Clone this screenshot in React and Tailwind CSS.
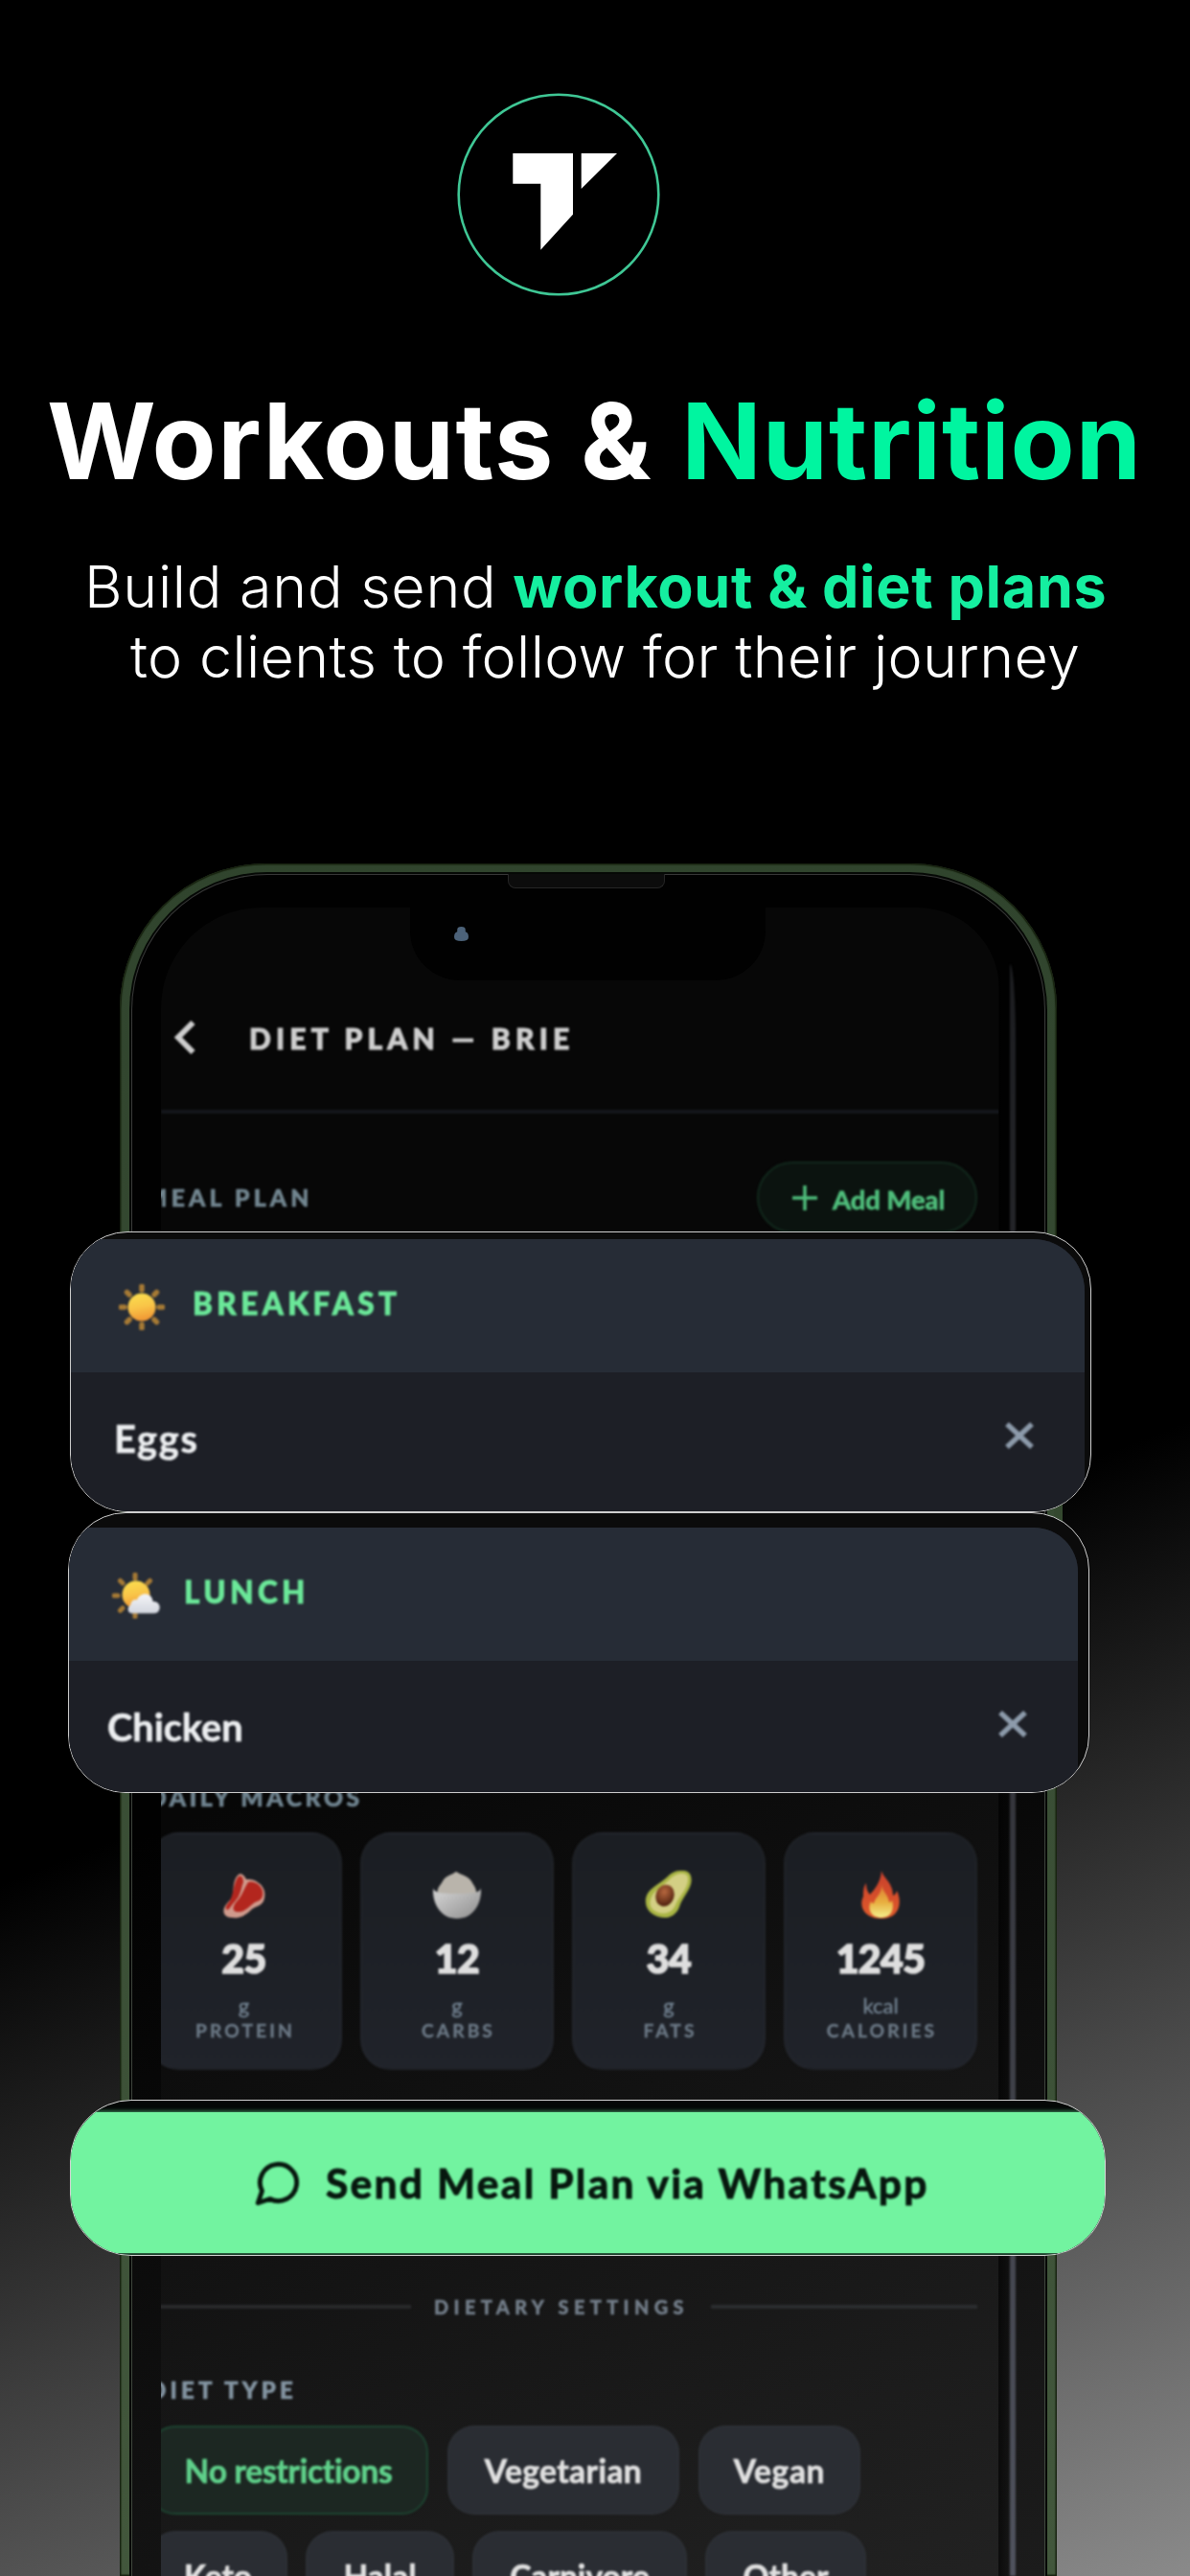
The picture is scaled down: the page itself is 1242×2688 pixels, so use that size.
import React from "react";

function Logo() {
  return (
    <svg viewBox="0 0 212 212" className="block h-[212px] w-[212px]">
      <circle cx="106" cy="106" r="104.3" fill="none" stroke="#3fc795" strokeWidth="2.6" />
      <path d="M58.3 63H121V126.700L87.300 163.700V94.700H58.300ZM129.700 63H167L129.700 100Z" fill="#fff" />
    </svg>
  );
}

function SunIcon() {
  return (
    <svg viewBox="0 0 48 48" className="block h-[48px] w-[48px] shrink-0 blur-[1px]">
      <defs>
        <linearGradient id="sunFill" x1="0" y1="0" x2="0.2" y2="1">
          <stop offset="0" stopColor="#fbe04f" />
          <stop offset="0.55" stopColor="#f9c548" />
          <stop offset="1" stopColor="#f19a35" />
        </linearGradient>
      </defs>
      <path
        d="M24 2V6M24 42V46M2 24H6M42 24H46M8.500 8.500L11 11M37 37L39.500 39.500M8.500 39.500L11 37M37 11L39.500 8.500"
        stroke="#a67a35"
        strokeWidth="5.500"
        strokeLinecap="round"
      />
      <circle cx="24" cy="24" r="14.500" fill="url(#sunFill)" />
    </svg>
  );
}

function SunCloudIcon() {
  return (
    <svg viewBox="0 0 50 48" className="block h-[48px] w-[50px] shrink-0 blur-[1px]">
      <defs>
        <linearGradient id="cloudFill" x1="0" y1="0" x2="0" y2="1">
          <stop offset="0" stopColor="#f4f5f8" />
          <stop offset="1" stopColor="#d2d6de" />
        </linearGradient>
      </defs>
      <path
        d="M24 2V6M24 42V46M2 24H6M8.500 8.500L11 11M8.500 39.500L11 37M37 11L39.500 8.500"
        stroke="#a67a35"
        strokeWidth="5"
        strokeLinecap="round"
      />
      <circle cx="25" cy="23" r="14.500" fill="url(#sunFill)" />
      <path
        d="M20.500 42.500C16 42.500 15 36 19.500 33.500C19.500 29.500 23 27.500 26 28.500C28 22 37 20 41 25.500C42 27 42.500 28.500 42.500 30C48 30 50.500 34 49.500 38C48.800 41 46.500 42.500 43.500 42.500Z"
        fill="url(#cloudFill)"
      />
    </svg>
  );
}

function SteakIcon() {
  return (
    <svg viewBox="0 0 50 50" className="block h-[50px] w-[50px]">
      <path
        d="M19 4C22 2 25 5 27 9C31 9 36 9 40 13C46 17 48 24 45 32C41 38 36 37 32 41C27 46 21 50 12 49C5 49 2 44 4 39C6 33 12 31 13 25C14 18 13 9 19 4Z"
        fill="#cf9a8c"
      />
      <path
        d="M19 6C22 4 24 8 24 12C22 17 22 21 19 27C16 32 13 34 9 40C6 42 4 39 8 34C14 29 13 12 19 6Z"
        fill="#b3261e"
      />
      <path
        d="M29 12C34 10 42 14 44 21C45 28 43 31 36 33C30 37 27 43 18 43C12 43 12 37 18 31C23 25 24 20 29 12Z"
        fill="#b3261e"
      />
    </svg>
  );
}

function RiceIcon() {
  return (
    <svg viewBox="0 0 50 50" className="block h-[50px] w-[50px]">
      <defs>
        <linearGradient id="bowlFill" x1="0" y1="0" x2="1" y2="1">
          <stop offset="0.2" stopColor="#c9c9c9" />
          <stop offset="1" stopColor="#8d8d8d" />
        </linearGradient>
      </defs>
      <path d="M5 26C3 18 8 15 10 11C13 5 19 5 24 1C30 5 36 5 40 11C42 15 46 18 45 26Z" fill="#b9b4ab" />
      <path d="M0 18C1 23 8 24 25 24C42 24 49 23 50 18C51 33 43 50 25 50C7 50 -1 33 0 18Z" fill="url(#bowlFill)" />
    </svg>
  );
}

function AvocadoIcon() {
  return (
    <svg viewBox="0 0 50 50" className="block h-[50px] w-[50px]">
      <defs>
        <radialGradient id="pitFill" cx="0.400" cy="0.350" r="0.700">
          <stop offset="0" stopColor="#b8683f" />
          <stop offset="1" stopColor="#4a1d0c" />
        </radialGradient>
      </defs>
      <path
        d="M38 0C47 -1 50 6 48 14C45 24 39 28 36 38C32 48 23 51 14 48C4 45 0 38 1 29C3 18 15 15 24 6C29 1 33 0 38 0Z"
        fill="#a9b544"
      />
      <path
        d="M39 3C46 3 46 9 44 15C41 23 35 28 32 36C29 43 22 46 15 44C7 42 4 36 6 30C8 21 17 18 26 9C31 4 35 3 39 3Z"
        fill="#d3cf84"
      />
      <ellipse cx="21" cy="26" rx="9.500" ry="11.500" transform="rotate(20 21 26)" fill="url(#pitFill)" />
    </svg>
  );
}

function FireIcon() {
  return (
    <svg viewBox="0 0 50 50" className="block h-[50px] w-[50px]">
      <defs>
        <linearGradient id="flameFill" x1="0" y1="0" x2="0" y2="1">
          <stop offset="0" stopColor="#c8402c" />
          <stop offset="1" stopColor="#e05a2b" />
        </linearGradient>
        <linearGradient id="flameCore" x1="0" y1="0" x2="0" y2="1">
          <stop offset="0" stopColor="#dd7a32" />
          <stop offset="0.550" stopColor="#e8b040" />
          <stop offset="1" stopColor="#f3f08c" />
        </linearGradient>
      </defs>
      <path
        d="M26 0C28 8 38 12 38 26C41 25 41 23 42 21C48 33 45 50 26 50C8 50 2 37 7 27C7 22 7 17 10 13C10 18 11 22 14 25C17 21 25 14 26 0Z"
        fill="url(#flameFill)"
      />
      <path d="M26 14C27 22 33 25 34 33C36 33 36 32 37 31C40 40 36 49 26 49C15 49 11 40 15 32C16 34 17 34 18 34C20 27 27 24 26 14Z" fill="url(#flameCore)" />
    </svg>
  );
}

function CloseIcon() {
  return (
    <svg viewBox="0 0 32 30" className="block h-[30px] w-[32px] blur-[1px]">
      <path d="M3 3L29 27M29 3L3 27" stroke="#8d9bab" strokeWidth="5.500" />
    </svg>
  );
}

const macros = [
  { icon: <SteakIcon />, value: "25", unit: "g", label: "PROTEIN", shift: "pr-[3px]" },
  { icon: <RiceIcon />, value: "12", unit: "g", label: "CARBS", shift: "" },
  { icon: <AvocadoIcon />, value: "34", unit: "g", label: "FATS", shift: "" },
  { icon: <FireIcon />, value: "1245", unit: "kcal", label: "CALORIES", shift: "" },
];

function MacroCard({ icon, value, unit, label, shift }) {
  return (
    <div className={`flex h-[248px] flex-col items-center rounded-[32px] border-2 border-white/[0.02] bg-gradient-to-b from-[#1b1e23] to-[#20232a] pt-[38px] ${shift}`}>
      {icon}
      <div className="mt-[22px] text-[41px] leading-[40px] font-black tracking-[-0.600px] text-[#dedede] [-webkit-text-stroke:1.600px_#dedede]">{value}</div>
      <div className="mt-[18px] text-[22px] leading-[22px] text-[#71808f] [-webkit-text-stroke:0.400px_#71808f]">{unit}</div>
      <div className="mt-[5px] pl-[3px] text-[19.200px] leading-[19px] font-bold tracking-[3.100px] text-[#6a7784] [-webkit-text-stroke:0.400px_#6a7784]">{label}</div>
    </div>
  );
}

function Chip({ children, size }) {
  return (
    <div className={`flex h-[93px] shrink-0 items-center justify-center rounded-[28px] border-2 border-white/[0.02] bg-[#2a2d33] text-[33.600px] leading-[34px] font-bold text-[#e0e0e0] [-webkit-text-stroke:0.700px_#e0e0e0] ${size}`}>
      {children}
    </div>
  );
}

function MealCard({ icon, title, item, place, panel, headPad, bodyPad }) {
  return (
    <section className={`absolute flex h-[293px] w-[1066px] flex-col overflow-hidden rounded-[60px] border border-[#cfcfcf] bg-[#0b0b0b] ${place}`}>
      <div className={`flex grow flex-col overflow-hidden bg-[#1d1f26] ${panel}`}>
        <div className={`flex h-[139px] shrink-0 items-center bg-[#262c36] ${headPad}`}>
          <div className="mt-[3px]">{icon}</div>
          <h2 className="-mt-[5px] text-[31.500px] leading-[32px] font-black tracking-[4.400px] text-[#6be899] blur-[1px] [-webkit-text-stroke:0.800px_#6be899]">{title}</h2>
        </div>
        <div className={`flex items-start justify-between pt-[49px] pr-[52px] ${bodyPad}`}>
          <div className="text-[39.700px] leading-[40px] font-bold text-[#eceef0] blur-[1px] [-webkit-text-stroke:0.600px_#eceef0]">{item}</div>
          <div className="mt-[2px]">
            <CloseIcon />
          </div>
        </div>
      </div>
    </section>
  );
}

function PhoneScreen() {
  return (
    <div className="ml-[30px] h-[1741px] w-[875px] overflow-hidden rounded-tl-[105px] rounded-tr-[85px] bg-white/[0.028]">
      <div className="blur-[1.100px]">
        <div className="flex h-[215px] items-start border-b-4 border-[#15171b] pt-[118px]">
          <div className="flex h-[35px] items-center pl-[13px]">
            <svg viewBox="0 0 23 35" className="block h-[35px] w-[23px]">
              <path d="M20.500 2L5 17.500L20.500 33" fill="none" stroke="#cecece" strokeWidth="6" />
            </svg>
            <div className="pl-[56px] text-[30px] leading-[30px] font-black tracking-[5.200px] whitespace-nowrap text-[#cecece] [-webkit-text-stroke:1px_#cecece]">DIET PLAN — BRIE</div>
          </div>
        </div>
        <div className="-ml-[13px] w-[865px]">
          <div className="mt-[50px] flex h-[75px] items-center justify-between">
            <div className="-ml-[4px] text-[24.700px] leading-[25px] font-black tracking-[4.200px] text-[#72868f] [-webkit-text-stroke:0.700px_#6f838f]">MEAL PLAN</div>
            <div className="flex h-[75px] w-[230px] items-center rounded-full border-2 border-[#12291d] bg-[#0b130f] pl-[35px] text-[#4fbd7b]">
              <svg viewBox="0 0 26 26" className="block h-[26px] w-[26px]">
                <path d="M13 0V26M0 13H26" stroke="currentColor" strokeWidth="3.500" />
              </svg>
              <div className="pt-[4px] pl-[16px] text-[27.400px] leading-[28px] font-bold whitespace-nowrap [-webkit-text-stroke:0.800px_#4fbd7b]">Add Meal</div>
            </div>
          </div>
          <div className="mt-[576px] text-[24.700px] leading-[25px] font-black tracking-[3.600px] text-[#6f838f] [-webkit-text-stroke:0.700px_#6f838f]">DAILY MACROS</div>
          <div className="mt-[24px] grid grid-cols-4 gap-[19px]">
            {macros.map((m) => (
              <MacroCard key={m.label} {...m} />
            ))}
          </div>
          <div className="mt-[237px] flex items-center">
            <div className="h-[4px] w-[274px] bg-[#28292b]" />
            <div className="pl-[24px] text-[19.900px] leading-[20px] font-black tracking-[5.400px] whitespace-nowrap text-[#727d89] [-webkit-text-stroke:0.500px_#727d89]">DIETARY SETTINGS</div>
            <div className="ml-[23px] h-[4px] grow bg-[#2b2d2f]" />
          </div>
          <div className="mt-[65px] text-[24px] leading-[24px] font-black tracking-[4.200px] text-[#8394a1] [-webkit-text-stroke:0.700px_#8394a1]">DIET TYPE</div>
          <div className="mt-[25px] flex gap-[20px]">
            <div className="flex h-[93px] w-[292px] shrink-0 items-center justify-center rounded-[28px] border-2 border-[#1d4431] bg-[#1c2722] text-[33.600px] leading-[34px] font-bold tracking-[-0.300px] text-[#5fd08a] [-webkit-text-stroke:0.700px_#5fd08a]">
              No restrictions
            </div>
            <Chip size="w-[242px] tracking-[0.400px]">Vegetarian</Chip>
            <Chip size="w-[169px] tracking-[0.600px]">Vegan</Chip>
          </div>
          <div className="mt-[17px] flex gap-[19px]">
            <Chip size="w-[145px]">Keto</Chip>
            <Chip size="w-[155px]">Halal</Chip>
            <Chip size="w-[224px]">Carnivore</Chip>
            <Chip size="w-[168px]">Other</Chip>
          </div>
        </div>
      </div>
    </div>
  );
}

function Phone() {
  return (
    <div className="relative ml-[125px] h-[1787px] w-[978px]">
      <div className="absolute top-[499px] left-[976px] h-[350px] w-[8px] rounded-r-[3px] bg-[#34482f]" />
      <div className="h-[1787px] overflow-hidden rounded-t-[152px] bg-gradient-to-b from-[#30442d] to-[#42573c] px-[10px] pt-[9px] shadow-[inset_0_0_1px_1.500px_#17220f]">
        <div className="h-[1778px] rounded-t-[144px] bg-[#050805] px-[2px] pt-[2px]">
          <div className="h-[1776px] rounded-t-[142px] bg-gradient-to-b from-[#383838] to-[#40483e] px-px pt-px">
            <div className="h-[1775px] rounded-t-[141px] bg-[linear-gradient(158.7deg,#010101_47%,#1c1c1c_100%)] pt-[34px]">
              <PhoneScreen />
            </div>
          </div>
        </div>
      </div>
      <div className="absolute top-[11px] left-[405px] h-[15px] w-[164px] rounded-b-[8px] border border-t-0 border-[#262626] bg-[#0c0c0c]" />
      <div className="absolute top-[46px] left-[303px] flex h-[76px] w-[371px] rounded-b-[52px] bg-[#010101] pt-[20px] pl-[46px]">
        <svg viewBox="0 0 14 14" className="block h-[15px] w-[15px]">
          <path d="M3 3Q3 0 7 0Q11 0 11 3V5Q14 6 14 10Q14 14 7 14Q0 14 0 10Q0 6 3 5Z" fill="#4c6279" />
        </svg>
      </div>
      <div className="absolute top-[110px] left-[917px] h-[1677px] w-[18px] rounded-tr-[18px_90px] bg-gradient-to-r from-black/60 via-black/30 to-black/0" />
      <div className="absolute top-[105px] left-[929px] h-[1682px] w-[6px] rounded-tr-[6px_80px] bg-gradient-to-b from-[#1c1d20] via-[#34353b] to-[#50535e] blur-[1px]" />
    </div>
  );
}

export default function App() {
  return (
    <main className="relative flex h-[2688px] w-[1242px] flex-col overflow-hidden bg-[linear-gradient(158.7deg,#000_62%,#8a8a8a_100%)] font-['Lato',sans-serif]">
      <header className="flex h-[901px] shrink-0 flex-col font-['Inter',sans-serif] text-white">
        <div className="pt-[97px] pl-[477px]">
          <Logo />
        </div>
        <h1 className="mt-[96px] pl-[49px] text-[109.600px] leading-[110px] font-bold tracking-[1.340px] whitespace-nowrap">
          Workouts &amp; <span className="ml-[3px] tracking-[0.900px] text-[#00f5a0]">Nutrition</span>
        </h1>
        <p className="mt-[61px] text-[61px] leading-[73px] font-light whitespace-nowrap">
          <span className="block pl-[88px] tracking-[0.700px]">
            Build and send <strong className="-ml-px font-bold tracking-[0.680px] text-[#15efa0]">workout &amp; diet plans</strong>
          </span>
          <span className="block pl-[136px] tracking-[0.330px]">to clients to follow for their journey</span>
        </p>
      </header>

      <Phone />

      <MealCard
        icon={<SunIcon />}
        title="BREAKFAST"
        item={<span className="tracking-[1.800px]">Eggs</span>}
        place="top-[1285px] left-[73px]"
        panel="mt-[7px] mr-[6px] rounded-tr-[54px]"
        headPad="gap-[29px] pl-[50px]"
        bodyPad="pl-[45px]"
      />
      <MealCard
        icon={<SunCloudIcon />}
        title="LUNCH"
        item="Chicken"
        place="top-[1578px] left-[71px]"
        panel="mt-[15px] mr-[11px] rounded-tr-[46px]"
        headPad="gap-[25px] pl-[45px]"
        bodyPad="pl-[40px]"
      />

      <button className="absolute top-[2191px] left-[73px] flex h-[163px] w-[1081px] overflow-hidden rounded-[64px] border border-[#d4d4d4] bg-[#050807]">
        <span className="mt-[12px] mb-[2px] flex grow items-center bg-[#72f3a0] pl-[191px] text-[#07170e] shadow-[0_0_4px_1px_#3f9160]">
          <svg viewBox="0 0 24 24" className="block h-[51px] w-[51px] blur-[1px]">
            <path d="M7.900 20A9 9 0 1 0 4 16.100L2 22Z" fill="none" stroke="currentColor" strokeWidth="2.300" strokeLinecap="round" strokeLinejoin="round" />
          </svg>
          <span className="pl-[24px] text-[42.500px] leading-[42px] font-bold tracking-[2.320px] whitespace-nowrap blur-[1px] [-webkit-text-stroke:1px_#07170e]">Send Meal Plan via WhatsApp</span>
        </span>
      </button>
    </main>
  );
}
